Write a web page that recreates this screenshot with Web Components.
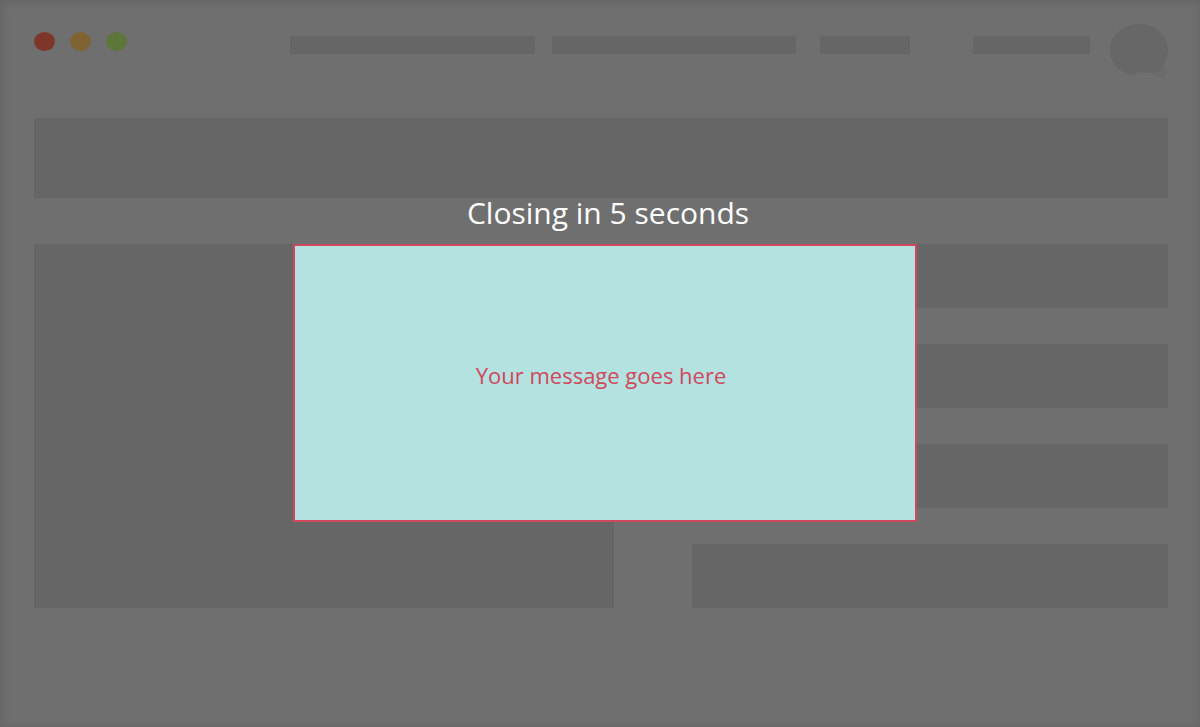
<!DOCTYPE html>
<html lang="en">
<head>
<meta charset="utf-8">
<meta name="viewport" content="width=device-width, initial-scale=1">
<title>Timed message</title>
<style>
  body { margin: 0; font-family: "Open Sans", "Noto Sans", sans-serif; }
</style>
</head>
<body>
<modal-stage>
  <wire-page></wire-page>
  <timed-modal slot="overlay" seconds="5">Your message goes here</timed-modal>
</modal-stage>
<script>
class ShadowElement extends HTMLElement {
  connectedCallback() {
    if (this.shadowRoot) return;
    this.attachShadow({ mode: "open" }).innerHTML = this.render();
  }
}

/* Holds a page with a dimming layer and a dialog over it. */
customElements.define("modal-stage", class extends ShadowElement {
  render() {
    return `
      <style>
        :host { display: grid; position: relative; min-height: 100vh; }
        .scrim {
          position: absolute; inset: 0;
          display: flex; align-items: center; justify-content: center;
          box-sizing: border-box; padding: 0 0 12px 10px;
          background: rgba(0, 0, 0, .5);
        }
      </style>
      <slot></slot>
      <div class="scrim"><slot name="overlay"></slot></div>`;
  }
});

/* Browser window dots. */
customElements.define("window-dots", class extends ShadowElement {
  render() {
    return `
      <style>
        :host { display: flex; gap: 15px; }
        i { width: 21px; height: 19px; border-radius: 50%; background: var(--dot); }
      </style>
      <i style="--dot:#ff6c54"></i><i style="--dot:#ffc664"></i><i style="--dot:#bdec72"></i>`;
  }
});

/* Placeholder block; its size comes from the layout around it. */
customElements.define("wire-block", class extends ShadowElement {
  render() {
    return `<style>:host { display: block; background: #ccc; }</style>`;
  }
});

/* Round avatar with a notch at its foot. */
customElements.define("wire-avatar", class extends ShadowElement {
  render() {
    return `
      <style>:host, svg { display: block; }</style>
      <svg width="58" height="56" viewBox="0 0 58 56" aria-hidden="true">
        <path fill="#d6d6d6" d="M42 46L52 40L57 46L54 54Q48 55 42 49Z"/>
        <path fill="#cecece" d="M29 0C44 0 57 10 58 25C58 35 54 43 46 48Q40 50 37 49Q31 47 25 50Q21 52 18 50C7 46 0 38 0 26C0 11 13 0 29 0Z"/>
      </svg>`;
  }
});

customElements.define("wire-page", class extends ShadowElement {
  render() {
    return `
      <style>
        :host {
          display: block; box-sizing: border-box; padding: 24px 32px 40px 34px;
          background: #dedede; box-shadow: inset 1px 1px 6px 3px #cecece;
        }
        header {
          display: grid; height: 56px;
          grid-template-columns: 256fr 245fr 17fr 244fr 24fr 90fr 63fr 117fr 20fr 58px;
        }
        header wire-block { height: 18px; margin-top: 12px; }
        window-dots { margin-top: 8px; }
        .b { grid-column: 4; } .c { grid-column: 6; } .d { grid-column: 8; }
        wire-avatar { grid-column: 10; }
        .banner { height: 80px; margin: 38px 0 46px; }
        main { display: grid; grid-template-columns: 580fr 476fr; column-gap: 78px; }
        .list { display: grid; grid-auto-rows: 64px; row-gap: 36px; }
      </style>
      <header>
        <window-dots></window-dots>
        <wire-block></wire-block>
        <wire-block class="b"></wire-block>
        <wire-block class="c"></wire-block>
        <wire-block class="d"></wire-block>
        <wire-avatar></wire-avatar>
      </header>
      <wire-block class="banner"></wire-block>
      <main>
        <wire-block></wire-block>
        <div class="list">
          <wire-block></wire-block><wire-block></wire-block>
          <wire-block></wire-block><wire-block></wire-block>
        </div>
      </main>`;
  }
});

customElements.define("timed-modal", class extends ShadowElement {
  render() {
    return `
      <style>
        :host { display: block; width: 52vw; }
        h2 {
          margin: 0; padding: 0 0 11px 6px;
          font-size: 30px; font-weight: 400; line-height: 40px;
          color: #fff; text-align: center;
        }
        .box {
          display: grid; place-items: center; box-sizing: border-box;
          min-height: 278px; padding: 0 8px 16px 0;
          background: #b4e2e1; border: 2px solid #d0485c;
        }
        p { margin: 0; font-size: 22px; line-height: 30px; color: #d0485c; }
      </style>
      <section role="dialog" aria-labelledby="title">
        <h2 id="title">Closing in ${this.getAttribute("seconds")} seconds</h2>
        <div class="box"><p><slot></slot></p></div>
      </section>`;
  }
});
</script>
</body>
</html>
